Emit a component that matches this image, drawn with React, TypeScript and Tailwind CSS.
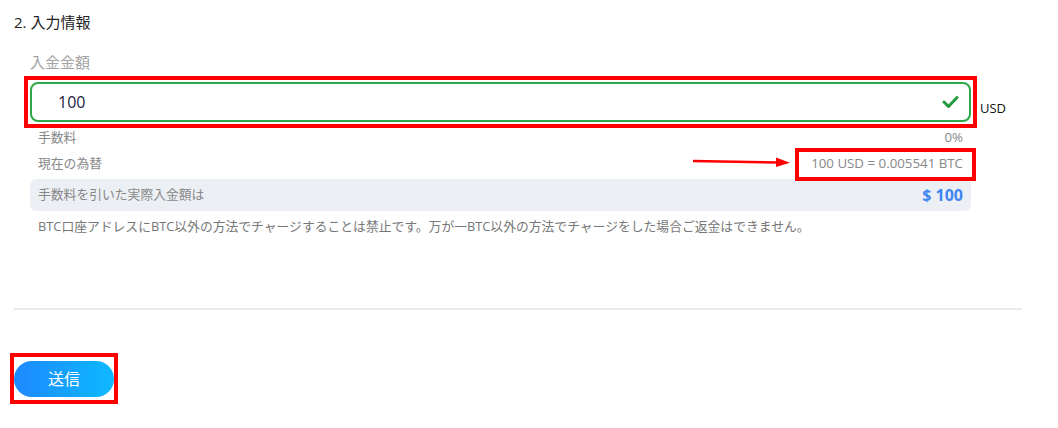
import React from "react";

const FONT = { fontFamily: '"Open Sans", "Noto Sans CJK JP", sans-serif' };

function Row({ label, value, children }: { label: string; value: string; children?: React.ReactNode }) {
  return (
    <div className="relative flex h-[26px] items-center justify-between px-2 text-[12.8px] text-[#888]">
      <span>{label}</span>
      <span className="relative text-[13.3px]">
        {value}
        {children}
      </span>
    </div>
  );
}

export default function App() {
  return (
    <div className="min-h-[428px] w-full bg-white px-[14px] pt-[12px]" style={FONT}>
      <h2 className="text-[15px] leading-5 text-[#222]">2. 入力情報</h2>

      <div className="ml-[16px] w-[941px]">
        <div className="mt-[20px] text-[15px] leading-5 text-[#a3a3a3]">入金金額</div>

        {/* amount input */}
        <div className="relative mt-[10px]">
          <div className="flex h-[40px] items-center rounded-lg border-2 border-[#2ea84a] pl-[26px] pr-[10px]">
            <span className="flex-1 text-[16px] text-[#1d1d3f]">100</span>
            <svg width="17" height="14" viewBox="0 0 17 14">
              <polyline points="2,7 6.5,11.5 15,2.5" fill="none" stroke="#239b3f" strokeWidth="3" strokeLinecap="round" strokeLinejoin="round" />
            </svg>
          </div>
          <span className="absolute left-[950px] top-[17px] text-[13px] text-[#111]">USD</span>
          <span className="pointer-events-none absolute -inset-[6px] border-4 border-[#f00]" />
        </div>

        <div className="mt-[3px]">
          <Row label="手数料" value="0%" />
          <Row label="現在の為替" value="100 USD = 0.005541 BTC">
            <span className="pointer-events-none absolute -bottom-[7px] -left-[16px] -right-[13px] -top-[6px] border-4 border-[#f00]" />
            <svg className="pointer-events-none absolute -left-[119px] top-[1px]" width="100" height="14" viewBox="0 0 100 14">
              <line x1="1" y1="6" x2="88" y2="7.5" stroke="#f00" strokeWidth="2.5" />
              <polygon points="84,2.5 98,7.7 84,12" fill="#f00" />
            </svg>
          </Row>
        </div>

        <div className="mt-[2px] flex h-[32px] items-center justify-between rounded-md bg-[#eceff4] px-2">
          <span className="text-[12.8px] text-[#888]">手数料を引いた実際入金額は</span>
          <span className="text-[16px] font-bold text-[#3f86f5]">$ 100</span>
        </div>

        <p className="mt-[6px] px-2 text-[12.8px] leading-[18px] text-[#777]">
          BTC口座アドレスにBTC以外の方法でチャージすることは禁止です。万が一BTC以外の方法でチャージをした場合ご返金はできません。
        </p>
      </div>

      <div className="mt-[73px] h-[2px] w-[1008px] bg-[#e8eaf0]" />

      <div className="relative mt-[51px] inline-block">
        <button
          type="button"
          className="flex h-[36px] w-[100px] items-center justify-center rounded-full bg-gradient-to-r from-[#1e88ff] to-[#0fb9ff] text-[16px] text-white"
        >
          送信
        </button>
        <span className="pointer-events-none absolute -bottom-[7px] -left-[4px] -right-[4px] -top-[8px] border-4 border-[#f00]" />
      </div>
    </div>
  );
}
